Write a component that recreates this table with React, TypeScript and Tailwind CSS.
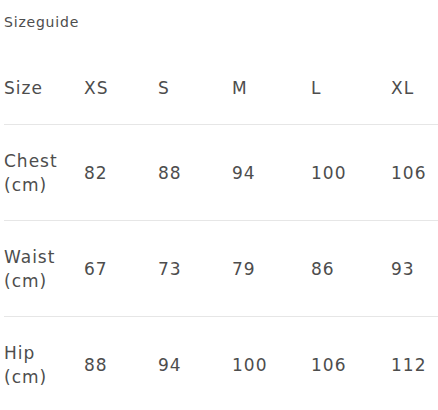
import React from 'react';

const sizes = ['XS', 'S', 'M', 'L', 'XL'];

const rows = [
  { label: 'Chest', values: [82, 88, 94, 100, 106] },
  { label: 'Waist', values: [67, 73, 79, 86, 93] },
  { label: 'Hip', values: [88, 94, 100, 106, 112] },
];

const gridCols = 'grid grid-cols-[80px_74px_74px_79px_80px_1fr] items-center';

const App: React.FC = () => {
  return (
    <div className="w-[438px] h-[410px] overflow-hidden bg-white text-[#4d4d4d] font-['DejaVu_Sans',sans-serif]">
      <p className="pl-1 pt-3 text-[14px] leading-5 tracking-[0.8px]">Sizeguide</p>

      <div className="mt-5 pl-1 text-[17px] leading-6 tracking-[1px]">
        {/* header */}
        <div className={`${gridCols} py-6 border-b border-[#e6e6e6]`}>
          <span>Size</span>
          {sizes.map(s => (
            <span key={s}>{s}</span>
          ))}
        </div>

        {rows.map((row, i) => (
          <div
            key={row.label}
            className={`${gridCols} pt-6 pb-[23px] ${i < rows.length - 1 ? 'border-b border-[#e6e6e6]' : ''}`}
          >
            <span>
              {row.label}
              <br />
              (cm)
            </span>
            {row.values.map((v, j) => (
              <span key={j}>{v}</span>
            ))}
          </div>
        ))}
      </div>
    </div>
  );
};

export default App;
